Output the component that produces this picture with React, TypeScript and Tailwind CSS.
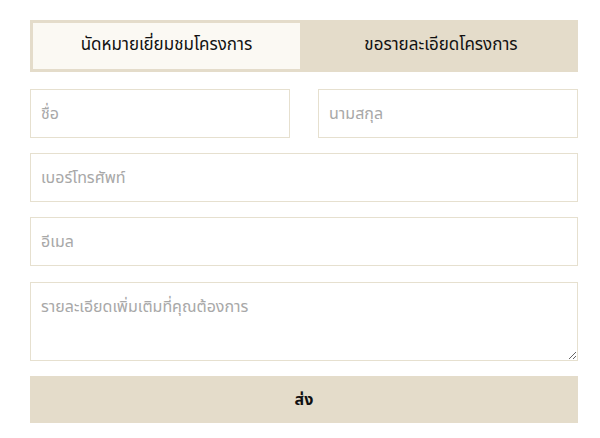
import React from "react";

const inputCls =
  "h-[49px] w-full border border-[#e6e0cf] bg-white px-[10px] text-[16px] text-[#333] placeholder:text-[#a8a8a8] outline-none";

export default function App() {
  return (
    <div
      className="min-h-[438px] bg-white pl-[30px] pr-[22px] pt-[20px]"
      style={{ fontFamily: '"Noto Sans Thai", "Noto Sans", "DejaVu Sans", sans-serif' }}
    >
      {/* tabs */}
      <div className="grid h-[52px] grid-cols-2 bg-[#e4dcca]">
        <button className="m-[3px] mr-[4px] bg-[#fbf9f3] text-[17px] text-[#111]">
          นัดหมายเยี่ยมชมโครงการ
        </button>
        <button className="text-[17px] text-[#111]">ขอรายละเอียดโครงการ</button>
      </div>

      <form className="mt-[17px] flex flex-col gap-[15px]">
        <div className="flex gap-[28px]">
          <input className={inputCls} placeholder="ชื่อ" />
          <input className={inputCls} placeholder="นามสกุล" />
        </div>
        <input className={inputCls} placeholder="เบอร์โทรศัพท์" />
        <input className={inputCls} placeholder="อีเมล" />
        <textarea
          className="mt-[1px] h-[79px] w-full border border-[#e6e0cf] bg-white px-[10px] py-[12px] text-[16px] text-[#333] placeholder:text-[#a8a8a8] outline-none"
          placeholder="รายละเอียดเพิ่มเติมที่คุณต้องการ"
        />
        <button
          type="button"
          className="h-[47px] w-full bg-[#e4dcca] text-[16px] font-bold text-[#111]"
        >
          ส่ง
        </button>
      </form>
    </div>
  );
}
